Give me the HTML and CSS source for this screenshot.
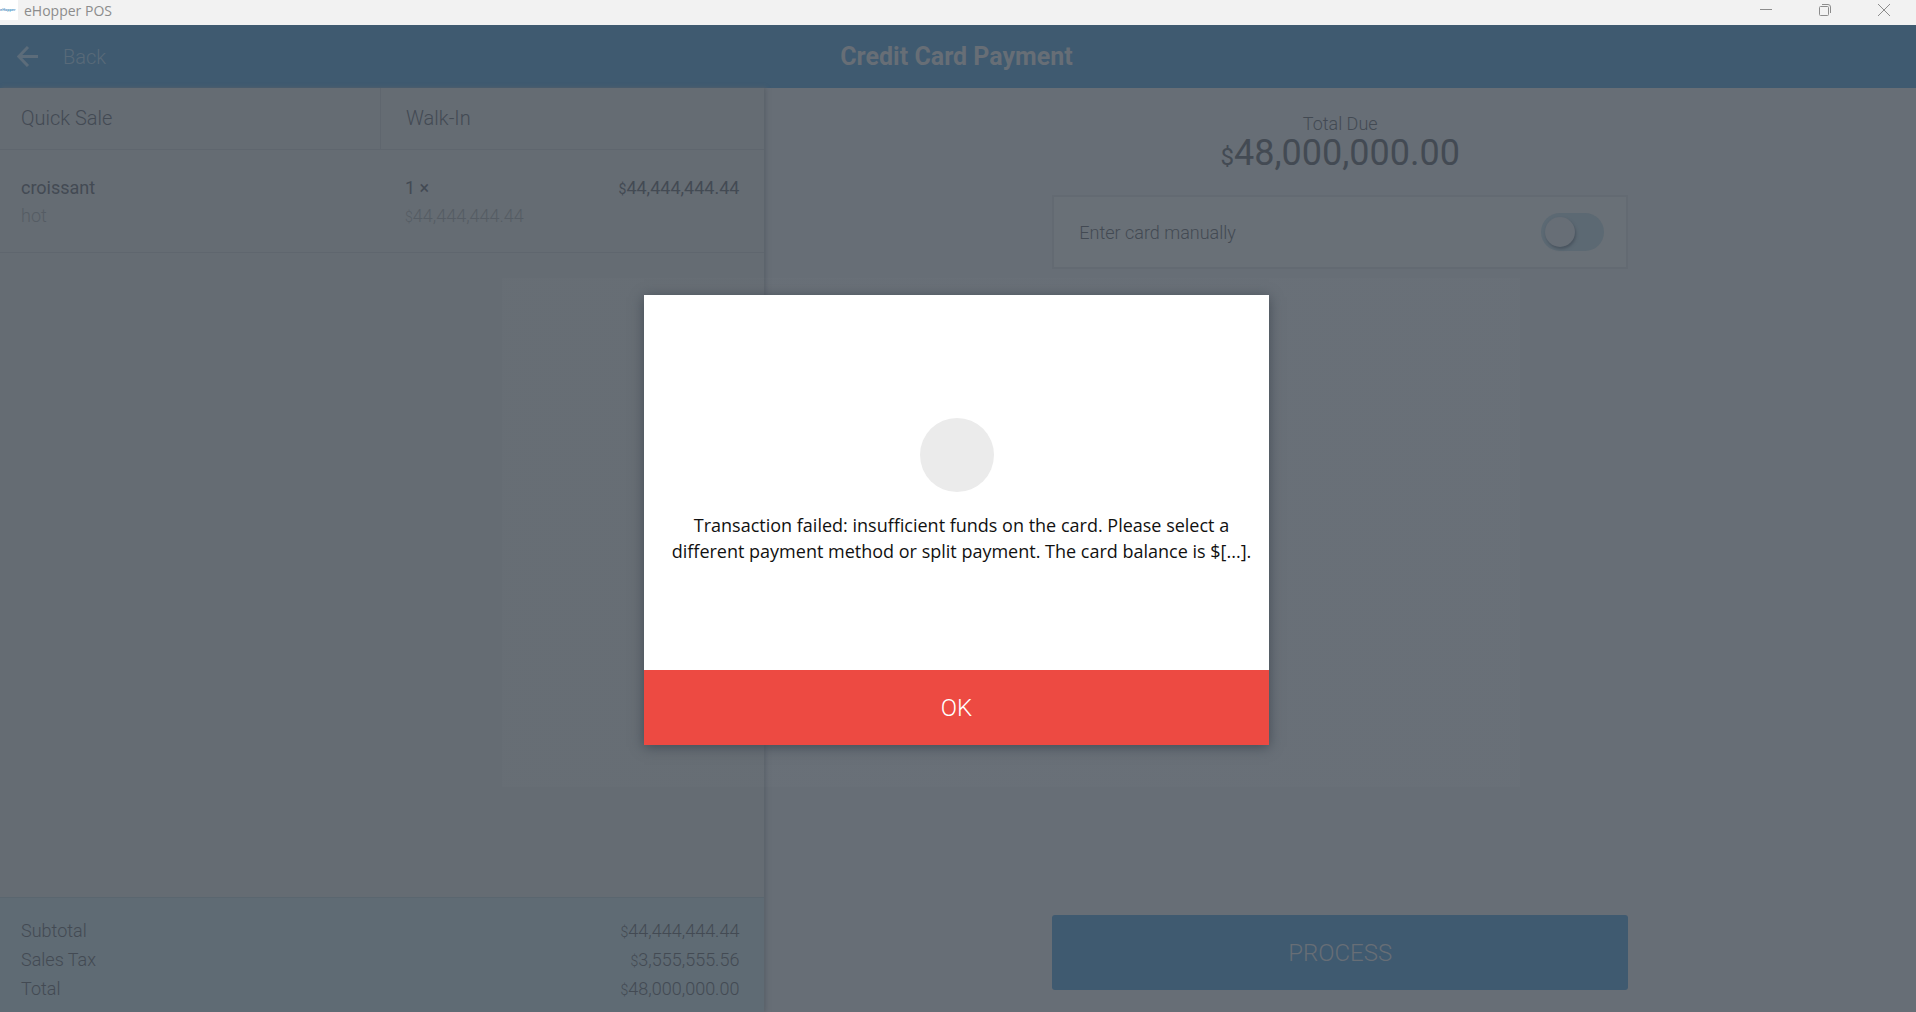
FILE: index.html
```html
<!DOCTYPE html>
<html lang="en">
<head>
<meta charset="utf-8">
<title>eHopper POS</title>
<link rel="stylesheet" href="styles.css">
</head>
<body>
<div class="window">
  <header class="titlebar">
    <span class="app-icon">eHopper</span>
    <span class="app-name">eHopper POS</span>
    <div class="window-controls">
      <button class="window-button" type="button" aria-label="Minimize"><svg width="12" height="12" viewBox="0 0 12 12"><path d="M0 5.5h12"/></svg></button>
      <button class="window-button" type="button" aria-label="Restore"><svg width="12" height="12" viewBox="0 0 12 12"><rect x=".5" y="2.5" width="9" height="9" rx="1"/><path d="M3 .5h6a2.5 2.5 0 0 1 2.500 2.500v6"/></svg></button>
      <button class="window-button" type="button" aria-label="Close"><svg width="12" height="12" viewBox="0 0 12 12"><path d="M0 0l12 12M12 0L0 12"/></svg></button>
    </div>
  </header>

  <nav class="navbar">
    <button class="back" type="button">
      <svg width="21" height="21" viewBox="0 0 21 21"><path d="M21 10.500H2M11 1L1.800 10.500 11 20"/></svg>
      <span>Back</span>
    </button>
    <h1 class="page-title">Credit Card Payment</h1>
  </nav>

  <main class="content">
    <section class="order">
      <div class="order-head">
        <div class="order-tab">Quick Sale</div>
        <div class="order-tab">Walk-In</div>
      </div>
      <div class="line-item">
        <div class="item-name">croissant</div>
        <div class="item-qty">1 ×</div>
        <div class="item-total"><small>$</small>44,444,444.44</div>
        <div class="item-note">hot</div>
        <div class="item-note"><small>$</small>44,444,444.44</div>
      </div>
      <dl class="totals">
        <div class="totals-row"><dt>Subtotal</dt><dd><small>$</small>44,444,444.44</dd></div>
        <div class="totals-row"><dt>Sales Tax</dt><dd><small>$</small>3,555,555.56</dd></div>
        <div class="totals-row"><dt>Total</dt><dd><small>$</small>48,000,000.00</dd></div>
      </dl>
    </section>

    <section class="payment">
      <div class="due-label">Total Due</div>
      <div class="due-amount"><small>$</small>48,000,000.00</div>
      <label class="manual">
        <span>Enter card manually</span>
        <input class="switch" type="checkbox">
      </label>
      <button class="process" type="button">PROCESS</button>
    </section>
  </main>

  <div class="overlay">
    <div class="dialog" role="alertdialog" aria-labelledby="dialog-message">
      <div class="dialog-body">
        <span class="dialog-icon"></span>
        <p class="dialog-message" id="dialog-message">Transaction failed: insufficient funds on the card. Please select a<br>different payment method or split payment. The card balance is $[...].</p>
      </div>
      <button class="dialog-ok" type="button">OK</button>
    </div>
  </div>
</div>
</body>
</html>
```

FILE: styles.css
```css
* {
  box-sizing: border-box;
}

body {
  margin: 0;
  font-family: Roboto, "Liberation Sans", sans-serif;
  font-weight: 300;
  color: #434a53;
}

button {
  border: 0;
  padding: 0;
  background: none;
  font: inherit;
  color: inherit;
}

svg {
  display: block;
  fill: none;
}

.window {
  position: relative;
  display: flex;
  flex-direction: column;
  min-height: 100vh;
  background: #676e76;
}

/* Title bar */
.titlebar {
  display: flex;
  height: 25px;
  padding-right: 3px;
  background: #f2f2f2;
  color: #8c8c8c;
  font: 400 14px/22px "Open Sans", sans-serif;
}

.app-icon {
  width: 18px;
  height: 20px;
  margin-right: 6px;
  overflow: hidden;
  background: #fff;
  color: #5a9bc8;
  font: 700 4px/20px Roboto, sans-serif;
}

.window-controls {
  display: flex;
  margin-left: auto;
}

.window-button {
  display: flex;
  justify-content: center;
  width: 59px;
  height: 20px;
  padding-top: 4px;
  stroke: #8c8c8c;
}

/* Navigation bar */
.navbar {
  display: grid;
  grid-template-columns: 1fr auto 1fr;
  align-items: center;
  height: 63px;
  padding: 0 20px 0 17px;
  background: #3f5a70;
}

.back {
  display: flex;
  align-items: center;
  gap: 25px;
  font-size: 20px;
  color: #596a79;
}

.back svg {
  stroke: #5c6c7a;
  stroke-width: 3;
}

.page-title {
  margin: 0;
  font-size: 25px;
  font-weight: 700;
  color: #676e76;
}

.content {
  display: flex;
  flex: 1;
}

/* Order */
.order {
  display: flex;
  flex-direction: column;
  width: calc(40% - 2px);
  background: #656c73;
  box-shadow: 2px 0 4px #5a6169;
}

.order-head {
  display: grid;
  grid-template-columns: 380px 1fr;
  font-size: 20px;
  line-height: 61px;
  border-bottom: 1px solid #5f666e;
}

.order-tab {
  padding-left: 21px;
}

.order-tab + .order-tab {
  padding-left: 25px;
  border-left: 1px solid #5f666e;
}

.line-item {
  display: grid;
  grid-template-columns: 384px 1fr auto;
  padding: 24px 25px 22px 21px;
  font-size: 18px;
  line-height: 28px;
  border-bottom: 1px solid #5f666e;
}

.item-name,
.item-qty,
.item-total {
  font-weight: 400;
}

.item-note {
  color: #555c64;
}

small {
  font-size: 14px;
  line-height: 1;
}

.totals {
  margin: auto 0 0;
  padding: 18px 25px 9px 21px;
  background: #5f6b74;
  border-top: 1px solid #5a666f;
  font-size: 18px;
  line-height: 29px;
}

.totals-row {
  display: flex;
  justify-content: space-between;
}

.totals dd {
  margin: 0;
}

/* Payment */
.payment {
  display: flex;
  flex: 1;
  flex-direction: column;
  align-items: center;
  padding: 25px 0 22px;
}

.due-label {
  font-size: 18px;
  line-height: 22px;
}

.due-amount {
  font-size: 36px;
  font-weight: 400;
  line-height: 36px;
}

.due-amount small {
  font-size: 24px;
}

.manual {
  display: flex;
  align-items: center;
  justify-content: space-between;
  width: 50%;
  height: 74px;
  margin-top: 24px;
  padding: 0 22px 0 25px;
  border: 2px solid #636a72;
  background: #697077;
  font-size: 18px;
}

.switch {
  appearance: none;
  width: 63px;
  height: 38px;
  margin: 0;
  padding: 4px;
  border-radius: 19px;
  background: #5c6973;
}

.switch::before {
  content: "";
  display: block;
  width: 30px;
  height: 30px;
  border-radius: 50%;
  background: #676e76;
  box-shadow: 1px 2px 3px #48535e;
}

.process {
  width: 50%;
  height: 75px;
  margin-top: auto;
  border-radius: 3px;
  background: #3f5a70;
  font-size: 24px;
  color: #676e76;
}

/* Dialog, with a faint light panel behind it */
.overlay {
  position: absolute;
  inset: 28px 3px 0 0;
  display: grid;
  place-items: center;
  background: linear-gradient(rgb(255 255 255 / 1%), rgb(255 255 255 / 1%)) calc(50% + 54px) calc(50% + 12px) / 1018px 509px no-repeat;
}

.dialog {
  width: 625px;
  background: #fff;
  box-shadow: 0 2px 12px #434b54;
}

.dialog-body {
  display: flex;
  flex-direction: column;
  align-items: center;
  gap: 20px;
  min-height: 375px;
  padding-top: 123px;
}

.dialog-icon {
  width: 74px;
  height: 74px;
  border-radius: 50%;
  background: #ebebeb;
}

.dialog-message {
  margin: 0;
  padding-left: 10px;
  font: 400 18px/26px "Open Sans", sans-serif;
  color: #111;
  text-align: center;
  white-space: nowrap;
}

.dialog-ok {
  display: block;
  width: 100%;
  height: 75px;
  background: #ed4a42;
  font-size: 24px;
  color: #fff;
}
```
